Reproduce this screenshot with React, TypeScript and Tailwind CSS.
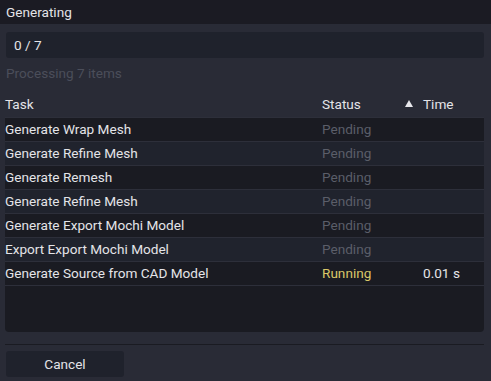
import React from 'react';

type Row = { task: string; status: 'Pending' | 'Running'; time?: string };

const rows: Row[] = [
  { task: 'Generate Wrap Mesh', status: 'Pending' },
  { task: 'Generate Refine Mesh', status: 'Pending' },
  { task: 'Generate Remesh', status: 'Pending' },
  { task: 'Generate Refine Mesh', status: 'Pending' },
  { task: 'Generate Export Mochi Model', status: 'Pending' },
  { task: 'Export Export Mochi Model', status: 'Pending' },
  { task: 'Generate Source from CAD Model', status: 'Running', time: '0.01 s' },
];

export default function App() {
  return (
    <div
      className="flex h-[381px] w-[491px] flex-col overflow-hidden bg-[#292b36] text-[13.6px] text-[#e4e4e8]"
      style={{ fontFamily: 'Roboto, "Liberation Sans", sans-serif' }}
    >
      {/* title bar */}
      <div className="flex h-6 shrink-0 items-center bg-[#1b1b23] px-[6px]">Generating</div>

      <div className="flex flex-1 flex-col pl-[5px] pr-[7px]">
        {/* progress */}
        <div className="mt-2 ml-px flex h-[26px] items-center rounded-[3px] bg-[#1f222c] px-2">0 / 7</div>

        <div className="mt-[6px] flex h-[18px] items-center px-px text-[#4b4e5a]">Processing 7 items</div>

        {/* header */}
        <div className="mt-[10px] flex h-[25px] items-center">
          <span className="flex-1">Task</span>
          <span className="w-[83px]">Status</span>
          <span className="flex w-[18px] items-center">
            <svg width="8" height="7" viewBox="0 0 8 7" className="mb-[3px]">
              <path d="M4 0 L8 7 L0 7 Z" fill="#e8e8ec" />
            </svg>
          </span>
          <span className="w-[61px]">Time</span>
        </div>

        {/* table */}
        <div className="flex h-[215px] flex-col overflow-hidden rounded-b-[4px] bg-[#1a1b22]">
          {rows.map((r, i) => (
            <div
              key={i}
              className={
                'flex h-6 shrink-0 items-center border-t border-[#2d2f3a] ' +
                (i % 2 === 1 ? 'bg-[#20232d]' : 'bg-[#1a1b22]')
              }
            >
              <span className="flex-1">{r.task}</span>
              <span className={'w-[101px] ' + (r.status === 'Running' ? 'text-[#dac869]' : 'text-[#5b5e69]')}>
                {r.status}
              </span>
              <span className="w-[61px]">{r.time ?? ''}</span>
            </div>
          ))}
          <div className="border-t border-[#2d2f3a]" />
        </div>

        <div className="mt-[12px] h-px bg-[#1a1b22]" />

        {/* footer */}
        <div className="mt-[6px] ml-px flex h-[26px] w-[118px] items-center justify-center rounded-[3px] bg-[#1f222c]">
          Cancel
        </div>
      </div>
    </div>
  );
}
